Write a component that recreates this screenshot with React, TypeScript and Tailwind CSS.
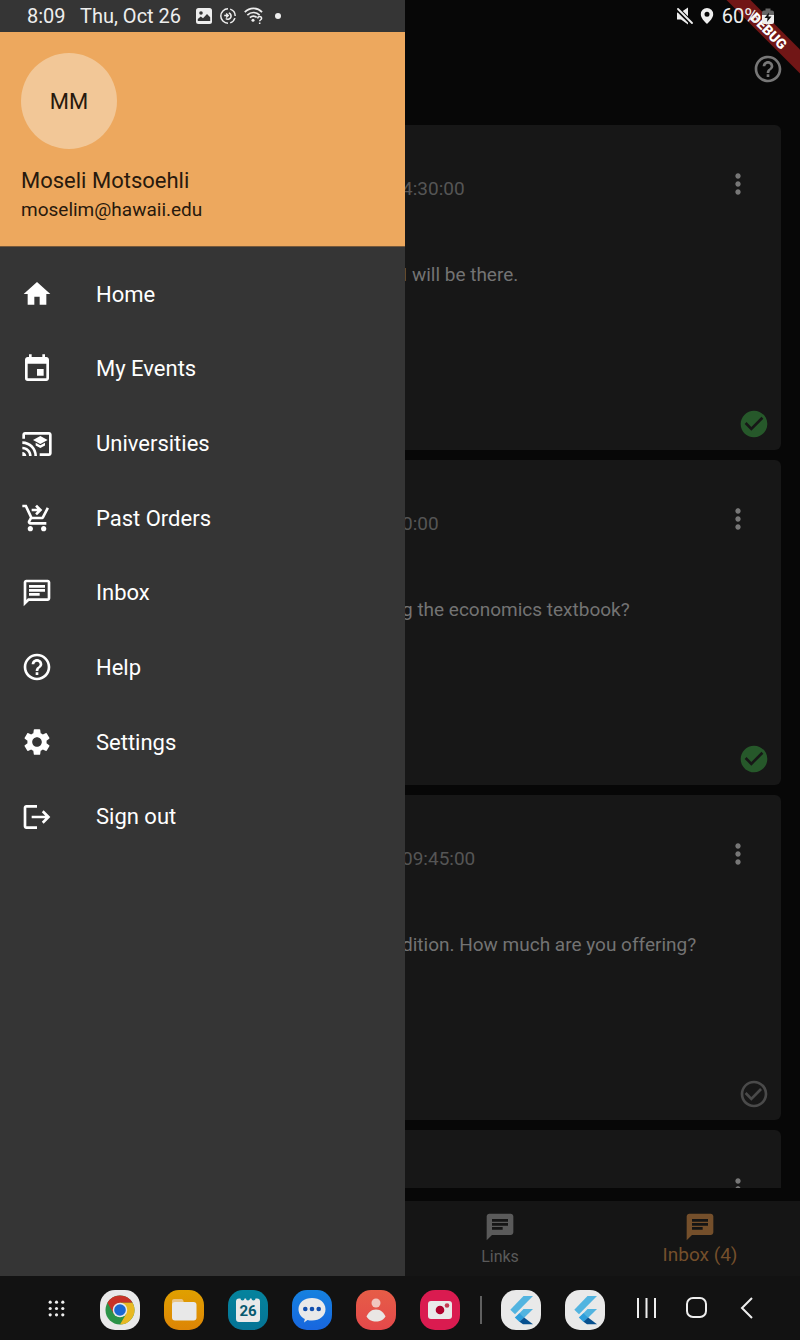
import type { ReactNode } from "react";
import type { IconType } from "react-icons";
import {
  MdCastForEducation,
  MdChat,
  MdCheckCircle,
  MdCheckCircleOutline,
  MdEvent,
  MdHelpOutline,
  MdHome,
  MdLogout,
  MdMoreVert,
  MdOutlineChat,
  MdSettings,
  MdShoppingCartCheckout,
} from "react-icons/md";

const menu: { label: string; Icon: IconType }[] = [
  { label: "Home", Icon: MdHome },
  { label: "My Events", Icon: MdEvent },
  { label: "Universities", Icon: MdCastForEducation },
  { label: "Past Orders", Icon: MdShoppingCartCheckout },
  { label: "Inbox", Icon: MdOutlineChat },
  { label: "Help", Icon: MdHelpOutline },
  { label: "Settings", Icon: MdSettings },
  { label: "Sign out", Icon: MdLogout },
];

const messages = [
  { time: "4:30:00", text: "I will be there.", read: true },
  { time: "0:00", text: "g the economics textbook?", read: true },
  { time: "09:45:00", text: "dition. How much are you offering?", read: false },
  { time: "", text: "", read: false },
];

function StatusBar() {
  return (
    <header className="absolute inset-x-0 top-0 flex h-8 items-center justify-between pl-[27px] pr-[26px] text-xl text-[#eeeeee]">
      <div className="flex items-center">
        <span className="w-[53px]">8:09</span>
        <span className="w-[116px]">Thu, Oct 26</span>
        <span className="flex items-center gap-2">
          <svg width="16" height="16" viewBox="0 0 16 16" aria-hidden="true">
            <rect width="16" height="16" rx="2.5" fill="#eeeeee" />
            <circle cx="5" cy="5" r="1.8" fill="#353535" />
            <path d="M1.800 13v-2l3-2.500 2.200 1.800 4-4.300 3.200 3.200V13z" fill="#353535" />
          </svg>
          <svg width="16" height="16" viewBox="0 0 16 16" fill="none" stroke="#eeeeee" aria-hidden="true">
            <path d="M10.200 1.150A7.200 7.200 0 0 1 15.200 8M14.900 10.100A7.200 7.200 0 0 1 10.200 14.850M8 15.200A7.200 7.200 0 1 1 8 .8" strokeWidth="1.500" />
            <path d="M8.800 5A3.200 3.200 0 1 1 5.800 10.500" strokeWidth="1.600" />
            <path d="M4.200 7.500h3.600M6.200 5.500l2 2-2 2" strokeWidth="1.500" />
          </svg>
          <svg width="19" height="18" viewBox="0 0 20 18" fill="none" stroke="#eeeeee" strokeWidth="1.800" className="mr-1" aria-hidden="true">
            <path d="M.8 5C6-.3 13.800-.3 19 5M3.500 8c3.700-3.600 9.200-3.600 12.900 0M6.200 10.700c2.200-2 5-2 7.200-.2" />
            <circle cx="9.500" cy="13.500" r="1.600" fill="#eeeeee" stroke="none" />
            <path d="M14.500 11.500c0-2.600 4-2.600 4 0 0 1.500-2 1.400-2 3M16.500 15.800v1.700" strokeWidth="1.600" />
          </svg>
          <span className="size-[6px] rounded-full bg-[#eeeeee]" />
        </span>
      </div>
      <div className="flex items-center">
        <svg width="16" height="18" viewBox="0 0 16 18" className="mr-[7px]" aria-hidden="true">
          <path d="M0 5.500h3.500L11 .5v17L4 12.500H0z" fill="#eeeeee" />
          <path d="M0 1.500l15 15" stroke="#0b0b0b" strokeWidth="4.500" />
          <path d="M1 2l14 14" stroke="#eeeeee" strokeWidth="1.800" strokeLinecap="round" />
        </svg>
        <svg width="14" height="16" viewBox="0 0 14 16" className="mr-2" aria-hidden="true">
          <path fillRule="evenodd" d="M7 0a6.200 6.200 0 0 1 6.200 6.200C13.200 10 9.500 13.500 7 16 4.500 13.500.8 10 .8 6.200A6.200 6.200 0 0 1 7 0zm0 3.700a2.500 2.500 0 1 0 0 5 2.500 2.500 0 0 0 0-5z" fill="#eeeeee" />
        </svg>
        <span className="mr-[3px]">60%</span>
        <svg width="12" height="18" viewBox="0 0 12 18" aria-hidden="true">
          <path d="M3.500 1.500h5v2H10a2 2 0 0 1 2 2V8H0V5.500a2 2 0 0 1 2-2h1.500z" fill="#666666" />
          <path d="M0 8h12v7a2 2 0 0 1-2 2H2a2 2 0 0 1-2-2z" fill="#eeeeee" />
          <path d="M7 5.500 2.500 11h3L5 15l4.500-5.500h-3z" fill="#111111" />
        </svg>
      </div>
    </header>
  );
}

function DebugRibbon() {
  return (
    <div className="pointer-events-none absolute right-0 top-0 size-20 overflow-hidden">
      <div className="absolute left-[-11px] top-[22px] flex h-[17px] w-[120px] rotate-45 items-center justify-center bg-[#711616] text-sm font-black text-white">
        DEBUG
      </div>
    </div>
  );
}

function Drawer() {
  return (
    <aside className="absolute inset-y-0 left-0 w-[405px] bg-[#353535] pt-8">
      <div className="flex h-[215px] flex-col border-b border-[#75583b] bg-[#eda85e] px-[21px] pt-[21px] text-[#28190d]">
        <div className="flex size-24 items-center justify-center rounded-full bg-[#f2c797] text-[22px]">MM</div>
        <p className="mt-[17px] text-[22px] leading-[30px]">Moseli Motsoehli</p>
        <p className="text-[19px] leading-7">moselim@hawaii.edu</p>
      </div>
      <nav className="grid h-[607px] auto-rows-fr pt-[10px] text-white">
        {menu.map(({ label, Icon }) => (
          <a key={label} href="#" className="flex items-center gap-[43px] px-[21px] text-[22px]">
            <Icon className="size-8" />
            {label}
          </a>
        ))}
      </nav>
    </aside>
  );
}

function MessageCard({ time, text, read }: { time: string; text: string; read: boolean }) {
  return (
    <article className="flex h-[325px] shrink-0 flex-col rounded-md bg-[#171717] pb-[10px] pl-[383px] pr-[11px] text-[19px] leading-6">
      <div className="flex h-[138px] items-start justify-between pr-4 pt-[43px]">
        <time className="pt-[9px] text-[#555555]">{time}</time>
        <button type="button" aria-label="Message options" className="text-[#777777]">
          <MdMoreVert className="size-8" />
        </button>
      </div>
      <p className="whitespace-nowrap text-[#737373]">{text}</p>
      {read ? (
        <MdCheckCircle className="mt-auto size-8 self-end text-[#26582a]" />
      ) : (
        <MdCheckCircleOutline className="mt-auto size-8 self-end text-[#4a4a4a]" />
      )}
    </article>
  );
}

function AppIcon({ label, tone, children }: { label: string; tone: string; children: ReactNode }) {
  return (
    <button type="button" aria-label={label} className={`size-10 shrink-0 overflow-hidden rounded-[15px] ${tone}`}>
      <svg viewBox="0 0 40 40" className="size-10" aria-hidden="true">
        {children}
      </svg>
    </button>
  );
}

function FlutterMark() {
  return (
    <>
      <path d="M22.500 6H32L14 24.300 9.300 19.800z" fill="#52b4e0" />
      <path d="M22.500 19H32L23.200 27.800l-4.800-4.600z" fill="#52b4e0" />
      <path d="m13.800 27.500 4.700-4.500 4.700 4.600-4.600 4.500z" fill="#2d9edb" />
      <path d="m18.500 31.800 4.600-4.400L32 34.200h-10z" fill="#07508f" />
    </>
  );
}

function Taskbar() {
  return (
    <footer className="flex h-16 shrink-0 items-center justify-between bg-[#121212] pl-12 pr-[41px] pt-1">
      <div className="flex items-center gap-6">
        <button type="button" aria-label="All apps" className="mr-[3px] pb-1">
          <svg width="17" height="17" viewBox="0 0 17 17" fill="#eeeeee" aria-hidden="true">
            {[2.2, 8.5, 14.8].map((y) => [2.2, 8.5, 14.8].map((x) => <circle key={`${x}-${y}`} cx={x} cy={y} r="1.6" />))}
          </svg>
        </button>
        <div className="flex items-center gap-6 pl-2">
          <AppIcon label="Chrome" tone="bg-[#e9e9e9]">
            <circle cx="20" cy="20" r="14.500" fill="#2b9348" />
            <path d="M7.440 12.750A14.500 14.500 0 0 1 32.560 12.750L20 12.750 13.720 23.630z" fill="#c83228" />
            <path d="M32.560 12.750A14.500 14.500 0 0 1 20 34.500L26.280 23.630 20 12.750z" fill="#e8b822" />
            <circle cx="20" cy="20" r="7.250" fill="#e9e9e9" />
            <circle cx="20" cy="20" r="5.800" fill="#1b68d2" />
          </AppIcon>
          <AppIcon label="Files" tone="bg-linear-to-b from-[#e0a000] to-[#dd8505]">
            <path d="M8 11a2 2 0 0 1 2-2h7.500a2 2 0 0 1 1.800 1.500L20 13v5H8z" fill="#e9c588" />
            <rect x="8" y="12" width="24.500" height="18.500" rx="3" fill="#e8e8e8" />
          </AppIcon>
          <AppIcon label="Calendar" tone="bg-linear-to-b from-[#05839d] to-[#057496]">
            <path d="M11 8.500h1.500a2 2 0 0 0 4 0h1.500a2 2 0 0 0 4 0h1.500a2 2 0 0 0 4 0H29a3 3 0 0 1 3 3V29a3 3 0 0 1-3 3H11a3 3 0 0 1-3-3V11.500a3 3 0 0 1 3-3z" fill="#e9e9e9" />
            <text x="20" y="26" textAnchor="middle" fontSize="15" fontWeight="700" fill="#075a70">26</text>
          </AppIcon>
          <AppIcon label="Messages" tone="bg-linear-to-b from-[#1681df] to-[#1866df]">
            <path d="M20 8c7.700 0 13.500 4.600 13.500 11.200S27.700 30.500 20 30.500c-1.800 0-3-.1-4.500-.6L12 32.500l.8-3.500C9 27 6.500 23.500 6.500 19.200 6.500 12.600 12.300 8 20 8z" fill="#e9e9e9" />
            <g fill="#124fae">
              <circle cx="13.300" cy="19" r="2.300" />
              <circle cx="20" cy="19" r="2.300" />
              <circle cx="26.700" cy="19" r="2.300" />
            </g>
          </AppIcon>
          <AppIcon label="Contacts" tone="bg-linear-to-b from-[#e65d47] to-[#e4484a]">
            <circle cx="20" cy="13" r="4.500" fill="#f0c6bf" />
            <path d="M20 19.500c5 0 8 3.500 9.500 7-1.500 3-5.500 5-9.500 5s-8-2-9.500-5c1.500-3.500 4.500-7 9.500-7z" fill="#e9e6e4" />
          </AppIcon>
          <AppIcon label="Camera" tone="bg-[#da1b50]">
            <rect x="8" y="11" width="24" height="18" rx="3" fill="#e9e9e9" />
            <circle cx="20" cy="20" r="4.300" fill="#b0002d" />
            <circle cx="27" cy="15.500" r="2.300" fill="#c43a52" />
          </AppIcon>
        </div>
        <div className="ml-[-4px] flex items-center gap-6">
          <span className="mr-[-5px] h-7 w-[2px] bg-[#606060]" />
          <AppIcon label="Flutter app" tone="bg-[#e9e9e9]">
            <FlutterMark />
          </AppIcon>
          <AppIcon label="Second Flutter app" tone="bg-[#e9e9e9]">
            <FlutterMark />
          </AppIcon>
        </div>
      </div>
      <div className="flex items-center gap-[26px] pb-1">
        <button type="button" aria-label="Recent apps">
          <svg width="24" height="24" viewBox="0 0 24 24" stroke="#eeeeee" strokeWidth="2" aria-hidden="true">
            <path d="M3 2v20M11.500 2v20M20 2v20" />
          </svg>
        </button>
        <button type="button" aria-label="Home screen">
          <svg width="24" height="24" viewBox="0 0 24 24" fill="none" stroke="#eeeeee" strokeWidth="2" aria-hidden="true">
            <rect x="2" y="2" width="19" height="19" rx="6" />
          </svg>
        </button>
        <button type="button" aria-label="Back">
          <svg width="24" height="24" viewBox="0 0 24 24" fill="none" stroke="#eeeeee" strokeWidth="2" aria-hidden="true">
            <path d="M17 2 7 12l10 10" />
          </svg>
        </button>
      </div>
    </footer>
  );
}

export default function App() {
  return (
    <div className="flex h-screen flex-col bg-[#070707] font-['Roboto',sans-serif]">
      <div className="relative flex min-h-0 flex-1 flex-col">
        <div className="flex h-[125px] shrink-0 items-start justify-end pr-4 pt-[53px]">
          <button type="button" aria-label="Help" className="text-[#777777]">
            <MdHelpOutline className="size-8" />
          </button>
        </div>
        <main className="mb-[13px] flex min-h-0 flex-1 flex-col gap-[10px] overflow-hidden px-[19px]">
          {messages.map((message, index) => (
            <MessageCard key={index} {...message} />
          ))}
        </main>
        <nav className="grid h-[75px] shrink-0 grid-cols-4 bg-[#151515]">
          <a href="#" className="col-start-3 flex flex-col items-center pt-[10px] text-base leading-7 text-[#5a5a5a]">
            <MdChat className="size-8" />
            Links
          </a>
          <a href="#" className="flex flex-col items-center pt-[10px] text-[19px] leading-6 text-[#744f2b]">
            <MdChat className="size-8" />
            Inbox (4)
          </a>
        </nav>
        <Drawer />
        <DebugRibbon />
        <StatusBar />
      </div>
      <Taskbar />
    </div>
  );
}
